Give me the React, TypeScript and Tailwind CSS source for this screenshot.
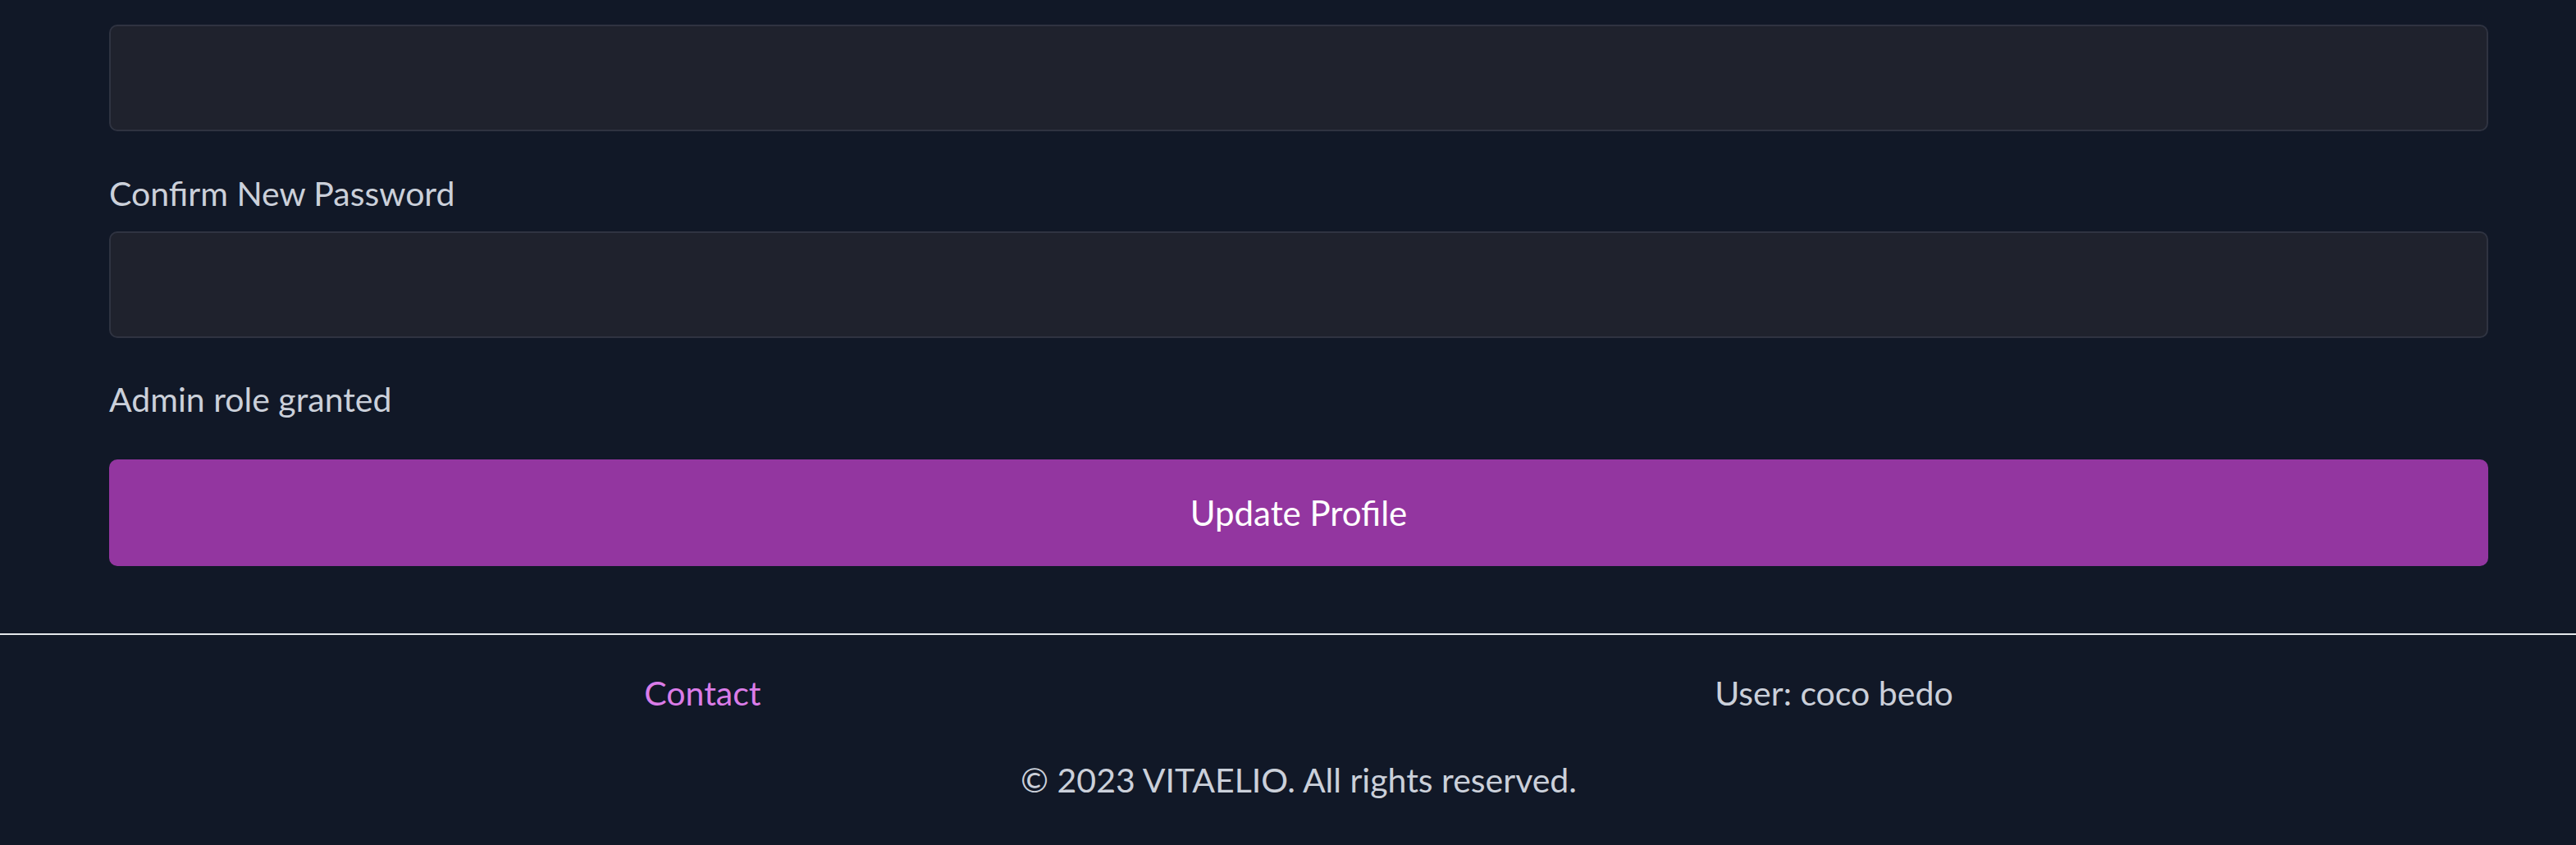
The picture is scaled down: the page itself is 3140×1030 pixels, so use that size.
import type { ReactNode } from "react";

const font = { fontFamily: '"Lato", "Noto Sans", sans-serif' };

function FieldLabel({ children }: { children: ReactNode }) {
  return (
    <p className="text-[41px] leading-[60px] text-[#cbd0da]">{children}</p>
  );
}

function PasswordInput() {
  return (
    <input
      type="password"
      className="block h-[130px] w-full rounded-[10px] border-2 border-[#2f3341] bg-[#1f222d] px-6 text-[40px] text-[#e5e7eb] outline-none"
    />
  );
}

export default function App() {
  return (
    <div style={font} className="h-[1030px] w-full overflow-hidden bg-[#111827]">
      <form
        className="ml-[133px] flex w-[2900px] flex-col pt-[30px]"
        onSubmit={(e) => e.preventDefault()}
      >
        <PasswordInput />

        <div className="mt-[46px]">
          <FieldLabel>Confirm New Password</FieldLabel>
        </div>
        <div className="mt-[16px]">
          <PasswordInput />
        </div>

        <div className="mt-[45px]">
          <FieldLabel>Admin role granted</FieldLabel>
        </div>

        <button
          type="submit"
          className="mt-[43px] flex h-[130px] w-full items-center justify-center rounded-[10px] bg-[#9336a0] text-[42px] leading-[52px] text-white"
        >
          Update Profile
        </button>
      </form>

      <footer className="mt-[82px] border-t-2 border-[#e5e7eb]">
        <div className="ml-[204px] mt-[41px] flex w-[2758px] justify-around text-[41px] leading-[60px]">
          <a href="#" className="text-[#da7ce8]">
            Contact
          </a>
          <span className="text-[#cbd0da]">User: coco bedo</span>
        </div>
        <p className="ml-[133px] mt-[46px] w-[2900px] text-center text-[41px] leading-[60px] text-[#cbd0da]">
          © 2023 VITAELIO. All rights reserved.
        </p>
      </footer>
    </div>
  );
}
